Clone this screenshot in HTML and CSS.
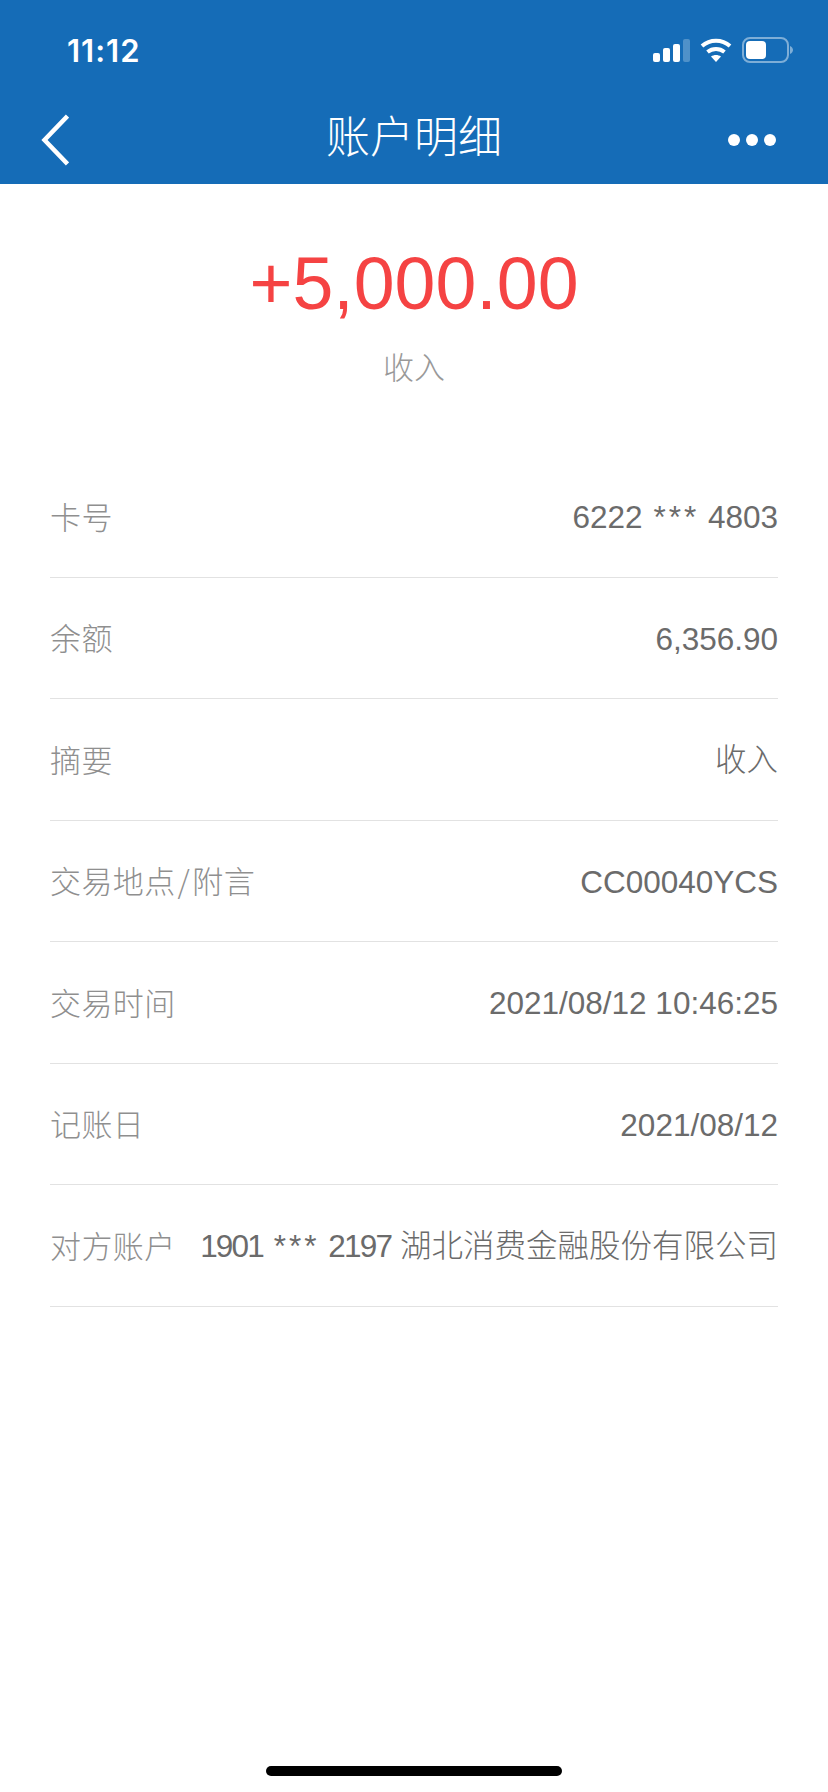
FILE: index.html
```html
<!DOCTYPE html>
<html lang="zh-CN">
<head>
    <meta charset="UTF-8">
    <meta name="viewport" content="width=device-width, initial-scale=1.0">
    <title>账户明细</title>
    <link rel="stylesheet" href="styles.css">
</head>
<body>
    <header class="top">
        <div class="status-bar">
            <span class="time">11:12</span>
            <div class="status-icons">
                <svg class="signal" width="37" height="23" viewBox="0 0 37 23">
                    <rect x="0" y="14" width="7" height="9" rx="2" fill="#fff"/>
                    <rect x="10" y="9" width="7" height="14" rx="2" fill="#fff"/>
                    <rect x="20" y="5" width="7" height="18" rx="2" fill="#fff"/>
                    <rect x="30" y="0" width="7" height="23" rx="2" fill="#fff" fill-opacity="0.25"/>
                </svg>
                <svg class="wifi" width="32" height="24" viewBox="0 0 32 24">
                    <path d="M2 8C10 1 22 1 30 8" fill="none" stroke="#fff" stroke-width="4"/>
                    <path d="M7.500 14C12.500 10 19.500 10 24.500 14" fill="none" stroke="#fff" stroke-width="4"/>
                    <path d="M11 18.500C14 16.500 18 16.500 21 18.500L16 24Z" fill="#fff"/>
                </svg>
                <svg class="battery" width="51" height="26" viewBox="0 0 51 26">
                    <rect x="1" y="1" width="45" height="24" rx="7" fill="none" stroke="#fff" stroke-opacity="0.45" stroke-width="2"/>
                    <rect x="4" y="4" width="20" height="18" rx="4" fill="#fff"/>
                    <path d="M48 9C50 10 51 11.500 51 13C51 14.500 50 16 48 17Z" fill="#fff" fill-opacity="0.45"/>
                </svg>
            </div>
        </div>
        <nav class="nav-bar">
            <svg class="back" width="28" height="52" viewBox="0 0 28 52">
                <path d="M26.500 2L3.500 26L26.500 50" fill="none" stroke="#fff" stroke-width="4.500"/>
            </svg>
            <h1>账户明细</h1>
            <div class="more"><i></i><i></i><i></i></div>
        </nav>
    </header>

    <section class="summary">
        <div class="amount">+5,000.00</div>
        <div class="kind">收入</div>
    </section>

    <ul class="details">
        <li><span class="label">卡号</span><span class="value">6222 <span class="mask">***</span> 4803</span></li>
        <li><span class="label">余额</span><span class="value">6,356.90</span></li>
        <li><span class="label">摘要</span><span class="value">收入</span></li>
        <li><span class="label">交易地点<span class="slash">/</span>附言</span><span class="value">CC00040YCS</span></li>
        <li><span class="label">交易时间</span><span class="value">2021/08/12 10:46:25</span></li>
        <li><span class="label">记账日</span><span class="value">2021/08/12</span></li>
        <li><span class="label">对方账户</span><span class="value"><span class="narrow">1901</span> <span class="mask">***</span> <span class="narrow">2197</span> 湖北消费金融股份有限公司</span></li>
    </ul>

    <div class="home-bar"></div>
</body>
</html>
```

FILE: styles.css
```css
html, body {
    height: 100%;
}
body {
    font-family: "Liberation Sans", "Noto Sans CJK SC", sans-serif;
    background-color: #fff;
    margin: 0;
    padding: 0;
    display: flex;
    flex-direction: column;
}
.top {
    background-color: #156cb7;
    color: #fff;
    height: 184px;
}
.status-bar {
    height: 88px;
    display: flex;
    align-items: center;
    justify-content: space-between;
    padding: 12px 35px 0 67px;
    box-sizing: border-box;
}
.time {
    font-family: Inter, sans-serif;
    font-size: 31px;
    font-weight: 600;
    letter-spacing: 1px;
}
.status-icons {
    display: flex;
    align-items: center;
    gap: 10px;
}
.nav-bar {
    height: 96px;
    display: grid;
    grid-template-columns: 1fr auto 1fr;
    align-items: center;
    padding: 8px 41px 0;
    box-sizing: border-box;
}
.nav-bar h1 {
    font-size: 44px;
    font-weight: 300;
    margin: 0 0 4px;
    line-height: 1;
}
.more {
    display: flex;
    gap: 6px;
    justify-self: end;
    margin-right: 11px;
}
.more i {
    display: block;
    width: 12px;
    height: 12px;
    border-radius: 50%;
    background-color: #fff;
}
.summary {
    text-align: center;
    padding-top: 58px;
}
.amount {
    font-size: 73.500px;
    line-height: 84px;
    color: #f54343;
}
.kind {
    font-size: 31px;
    font-weight: 300;
    line-height: 40px;
    color: #999;
    margin-top: 23px;
}
.details {
    list-style: none;
    margin: 67px 50px 0;
    padding: 0;
}
.details li {
    display: flex;
    justify-content: space-between;
    align-items: center;
    height: 121.5px;
    box-sizing: border-box;
    border-bottom: 1px solid #e2e2e2;
    white-space: nowrap;
}
.label {
    font-family: "Noto Sans CJK SC", sans-serif;
    font-size: 31px;
    line-height: 40px;
    letter-spacing: 0.4px;
    font-weight: 300;
    color: #8f8f8f;
    padding-bottom: 1px;
}
.slash {
    margin: 0 2px;
}
.value {
    font-size: 31.500px;
    font-weight: 300;
    line-height: 40px;
    color: #6b6b6b;
    padding-top: 2px;
}
.mask {
    letter-spacing: 3px;
    padding-left: 2px;
}
.narrow {
    letter-spacing: -1.800px;
}
.home-bar {
    width: 296px;
    height: 10px;
    border-radius: 5px;
    background-color: #000;
    margin: auto auto 16px;
}
```
